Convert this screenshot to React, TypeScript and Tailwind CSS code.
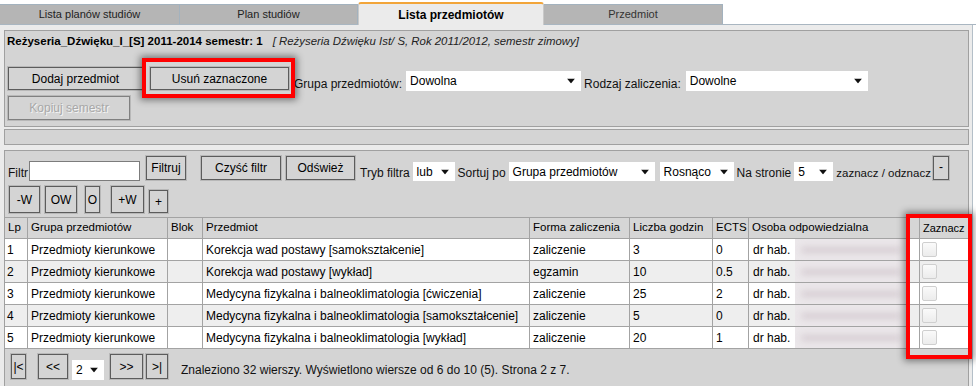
import React from "react";

function Arrow() {
  return (
    <svg width="8" height="5" viewBox="0 0 8 5" className="absolute right-[6px] top-1/2 -translate-y-1/2">
      <polygon points="0,0 8,0 4,5" fill="#111" />
    </svg>
  );
}

function Sel({ value, className }: { value: string; className: string }) {
  return (
    <div className={`relative shrink-0 bg-white flex items-center pl-[4px] text-[12px] text-black whitespace-nowrap ${className}`}>
      {value}
      <Arrow />
    </div>
  );
}

function Btn({ children, className, disabled }: { children: React.ReactNode; className: string; disabled?: boolean }) {
  return (
    <div
      className={`shrink-0 flex items-center justify-center bg-[#d4d4d4] border border-[#5c5c5c] shadow-[0_0_0_1px_#b8b8b8] text-[12px] whitespace-nowrap ${
        disabled ? "text-[#a8a8a8] [text-shadow:1px_1px_0_#f4f4f4] border-[#808080]" : "text-black"
      } ${className}`}
    >
      {children}
    </div>
  );
}

const rows = [
  ["1", "Korekcja wad postawy [samokształcenie]", "zaliczenie", "3", "0"],
  ["2", "Korekcja wad postawy [wykład]", "egzamin", "10", "0.5"],
  ["3", "Medycyna fizykalna i balneoklimatologia [ćwiczenia]", "zaliczenie", "25", "2"],
  ["4", "Medycyna fizykalna i balneoklimatologia [samokształcenie]", "zaliczenie", "5", "0"],
  ["5", "Medycyna fizykalna i balneoklimatologia [wykład]", "zaliczenie", "20", "1"],
];

const grid = "grid grid-cols-[23px_140px_35px_327px_100px_83px_36px_171px_1fr]";
const cell = "border-r border-[#a3a3a3] pl-[3px] flex items-center whitespace-nowrap overflow-hidden";

export default function App() {
  return (
    <div className="relative w-[976px] h-[386px] overflow-hidden bg-white font-['Liberation_Sans',Arial,sans-serif] text-[12px] text-[#111]">
      {/* Tabs */}
      <div className="h-[25px] flex items-end border-b border-[#a9b6c1]">
        <div className="w-[180px] h-[20px] bg-[#b5b5b5] border-t border-r border-[#a3b2be] flex items-center justify-center text-[11px] text-[#222]">
          Lista planów studiów
        </div>
        <div className="w-[178px] h-[20px] bg-[#b5b5b5] border-t border-r border-[#a3b2be] flex items-center justify-center text-[11px] text-[#222]">
          Plan studiów
        </div>
        <div className="w-[186px] h-[23px] -mb-px bg-[#ebebeb] border-t-2 border-t-[#f2a53a] border-l border-r border-l-[#c9c9c9] border-r-[#c9c9c9] rounded-t-[3px] flex items-start pt-[2px] justify-center font-bold text-[12px] text-black">
          Lista przedmiotów
        </div>
        <div className="w-[179px] h-[20px] bg-[#b5b5b5] border-t border-r border-[#a3b2be] flex items-center justify-center text-[11px] text-[#333]">
          Przedmiot
        </div>
      </div>

      {/* Body */}
      <div className="bg-[#ebebeb] pl-[4px] pt-[5px] h-[361px] border-r border-[#b4bfc8] w-[973px]">
        {/* Panel 1 */}
        <div className="w-[965px] bg-[#d4d4d4] border border-[#a0a0a0] pt-[3px] pb-[6px]">
          <div className="h-[16px] flex items-center pl-[2px] whitespace-nowrap">
            <span className="font-bold text-[11.5px] text-black">Reżyseria_Dźwięku_I_[S] 2011-2014 semestr: 1</span>
            <span className="italic text-[11.4px] text-[#222] ml-[10px]">[ Reżyseria Dźwięku Ist/ S, Rok 2011/2012, semestr zimowy]</span>
          </div>
          <div className="mt-[17px] flex items-start h-[23px]">
            <Btn className="ml-[3px] w-[135px] h-[23px]">Dodaj przedmiot</Btn>
            <Btn className="ml-[7px] w-[139px] h-[23px]">Usuń zaznaczone</Btn>
            <div className="ml-[5px] mt-[9px] leading-[16px] whitespace-nowrap text-[#111]">Grupa przedmiotów:</div>
            <Sel value="Dowolna" className="ml-[4px] mt-[4px] w-[175px] h-[20px]" />
            <div className="ml-[3px] mt-[9px] leading-[16px] whitespace-nowrap text-[#111]">Rodzaj zaliczenia:</div>
            <Sel value="Dowolne" className="ml-[5px] mt-[4px] w-[182px] h-[20px]" />
          </div>
          <div className="mt-[6px] flex">
            <Btn disabled className="ml-[3px] w-[122px] h-[24px]">Kopiuj semestr</Btn>
          </div>
        </div>

        {/* Bar */}
        <div className="mt-[2px] w-[965px] h-[16px] bg-[#d4d4d4] border border-[#a0a0a0]" />

        {/* Panel 3 */}
        <div className="mt-[5px] w-[965px] h-[240px] bg-[#d4d4d4] border border-[#a0a0a0] pt-[5px]">
          <div className="h-[25px] flex items-end whitespace-nowrap">
            <div className="ml-[3px] leading-[14px] pb-[1px]">Filtr</div>
            <div className="ml-[1px] w-[111px] h-[20px] shrink-0 bg-white border border-[#7c7c7c]" />
            <Btn className="ml-[6px] w-[40px] h-[24px] !items-start pt-[2px] mb-[1px]">Filtruj</Btn>
            <Btn className="ml-[15px] w-[80px] h-[24px] !items-start pt-[2px] mb-[1px]">Czyść filtr</Btn>
            <Btn className="ml-[5px] w-[69px] h-[24px] !items-start pt-[2px] mb-[1px]">Odśwież</Btn>
            <div className="ml-[5px] leading-[14px] pb-[1px]">Tryb filtra</div>
            <Sel value="lub" className="ml-[3px] w-[42px] h-[19px]" />
            <div className="ml-[3px] leading-[14px] pb-[1px]">Sortuj po</div>
            <Sel value="Grupa przedmiotów" className="ml-[3px] w-[146px] h-[19px]" />
            <Sel value="Rosnąco" className="ml-[5px] w-[74px] h-[19px]" />
            <div className="ml-[3px] leading-[14px] pb-[1px]">Na stronie</div>
            <Sel value="5" className="ml-[3px] w-[39px] h-[19px]" />
            <div className="ml-[3px] leading-[14px] pb-[1px] text-[11.5px]">zaznacz / odznacz</div>
            <Btn className="ml-[2px] w-[16px] h-[24px] !items-start pt-[1px] mb-[1px]">-</Btn>
          </div>
          <div className="mt-[5px] h-[27px] flex items-end">
            <Btn className="ml-[4px] w-[31px] h-[27px]">-W</Btn>
            <Btn className="ml-[5px] w-[32px] h-[27px]">OW</Btn>
            <Btn className="ml-[8px] w-[15px] h-[27px]">O</Btn>
            <Btn className="ml-[11px] w-[33px] h-[27px]">+W</Btn>
            <Btn className="ml-[5px] w-[19px] h-[23px]">+</Btn>
          </div>

          {/* Table */}
          <div className="mt-[4px] border-t border-[#a3a3a3]">
            <div className={`${grid} h-[21px] bg-[#d6d6d6] border-b border-[#a3a3a3] text-[11.5px] text-black`}>
              <div className={cell}>Lp</div>
              <div className={cell}>Grupa przedmiotów</div>
              <div className={cell}>Blok</div>
              <div className={cell}>Przedmiot</div>
              <div className={cell}>Forma zaliczenia</div>
              <div className={cell}>Liczba godzin</div>
              <div className={cell}>ECTS</div>
              <div className={cell}>Osoba odpowiedzialna</div>
              <div className="pl-[3px] flex items-center whitespace-nowrap text-[11px]">Zaznacz</div>
            </div>
            {rows.map((r, i) => (
              <div
                key={r[0]}
                className={`${grid} h-[22px] border-b border-[#a3a3a3] text-[12px] text-black ${i % 2 === 1 ? "bg-[#eeeeee]" : "bg-white"}`}
              >
                <div className={`${cell} !pl-[2px]`}>{r[0]}</div>
                <div className={cell}>Przedmioty kierunkowe</div>
                <div className={cell}></div>
                <div className={cell}>{r[1]}</div>
                <div className={cell}>{r[2]}</div>
                <div className={cell}>{r[3]}</div>
                <div className={cell}>{r[4]}</div>
                <div className={`${cell} pl-[4px]`}>
                  <span>dr hab.</span>
                  <div className="ml-[5px] w-[113px] h-[21px] bg-[#ebe7ea] flex items-center overflow-hidden">
                    <div className="ml-[6px] w-[100px] h-[6px] rounded-full bg-[#d6cdd2] blur-[3px]" />
                  </div>
                </div>
                <div className="flex items-center pl-[2px]">
                  <div className="w-[15px] h-[15px] border border-[#cfcfcf] rounded-[2px] bg-gradient-to-b from-[#fafafa] to-[#ececec]" />
                </div>
              </div>
            ))}
          </div>

          {/* Pagination */}
          <div className="mt-[5px] h-[26px] flex items-end whitespace-nowrap">
            <Btn className="ml-[6px] w-[15px] h-[25px] mb-[1px]">|&lt;</Btn>
            <Btn className="ml-[12px] w-[30px] h-[25px] mb-[1px]">&lt;&lt;</Btn>
            <Sel value="2" className="ml-[4px] w-[32px] h-[20px]" />
            <Btn className="ml-[6px] w-[33px] h-[25px] mb-[1px]">&gt;&gt;</Btn>
            <Btn className="ml-[3px] w-[22px] h-[25px] mb-[1px]">&gt;|</Btn>
            <div className="ml-[13px] leading-[14px] pb-[3px] text-[#111]">
              Znaleziono 32 wierszy. Wyświetlono wiersze od 6 do 10 (5). Strona 2 z 7.
            </div>
          </div>
        </div>
      </div>

      {/* Red annotation boxes */}
      <div className="absolute left-[142px] top-[58px] w-[153px] h-[40px] border-4 border-[#ff0000] shadow-[0_0_7px_2px_rgba(0,0,0,0.45)]" />
      <div className="absolute left-[906px] top-[214px] w-[66px] h-[145px] border-4 border-[#ff0000] shadow-[0_0_7px_2px_rgba(0,0,0,0.45)]" />
    </div>
  );
}
